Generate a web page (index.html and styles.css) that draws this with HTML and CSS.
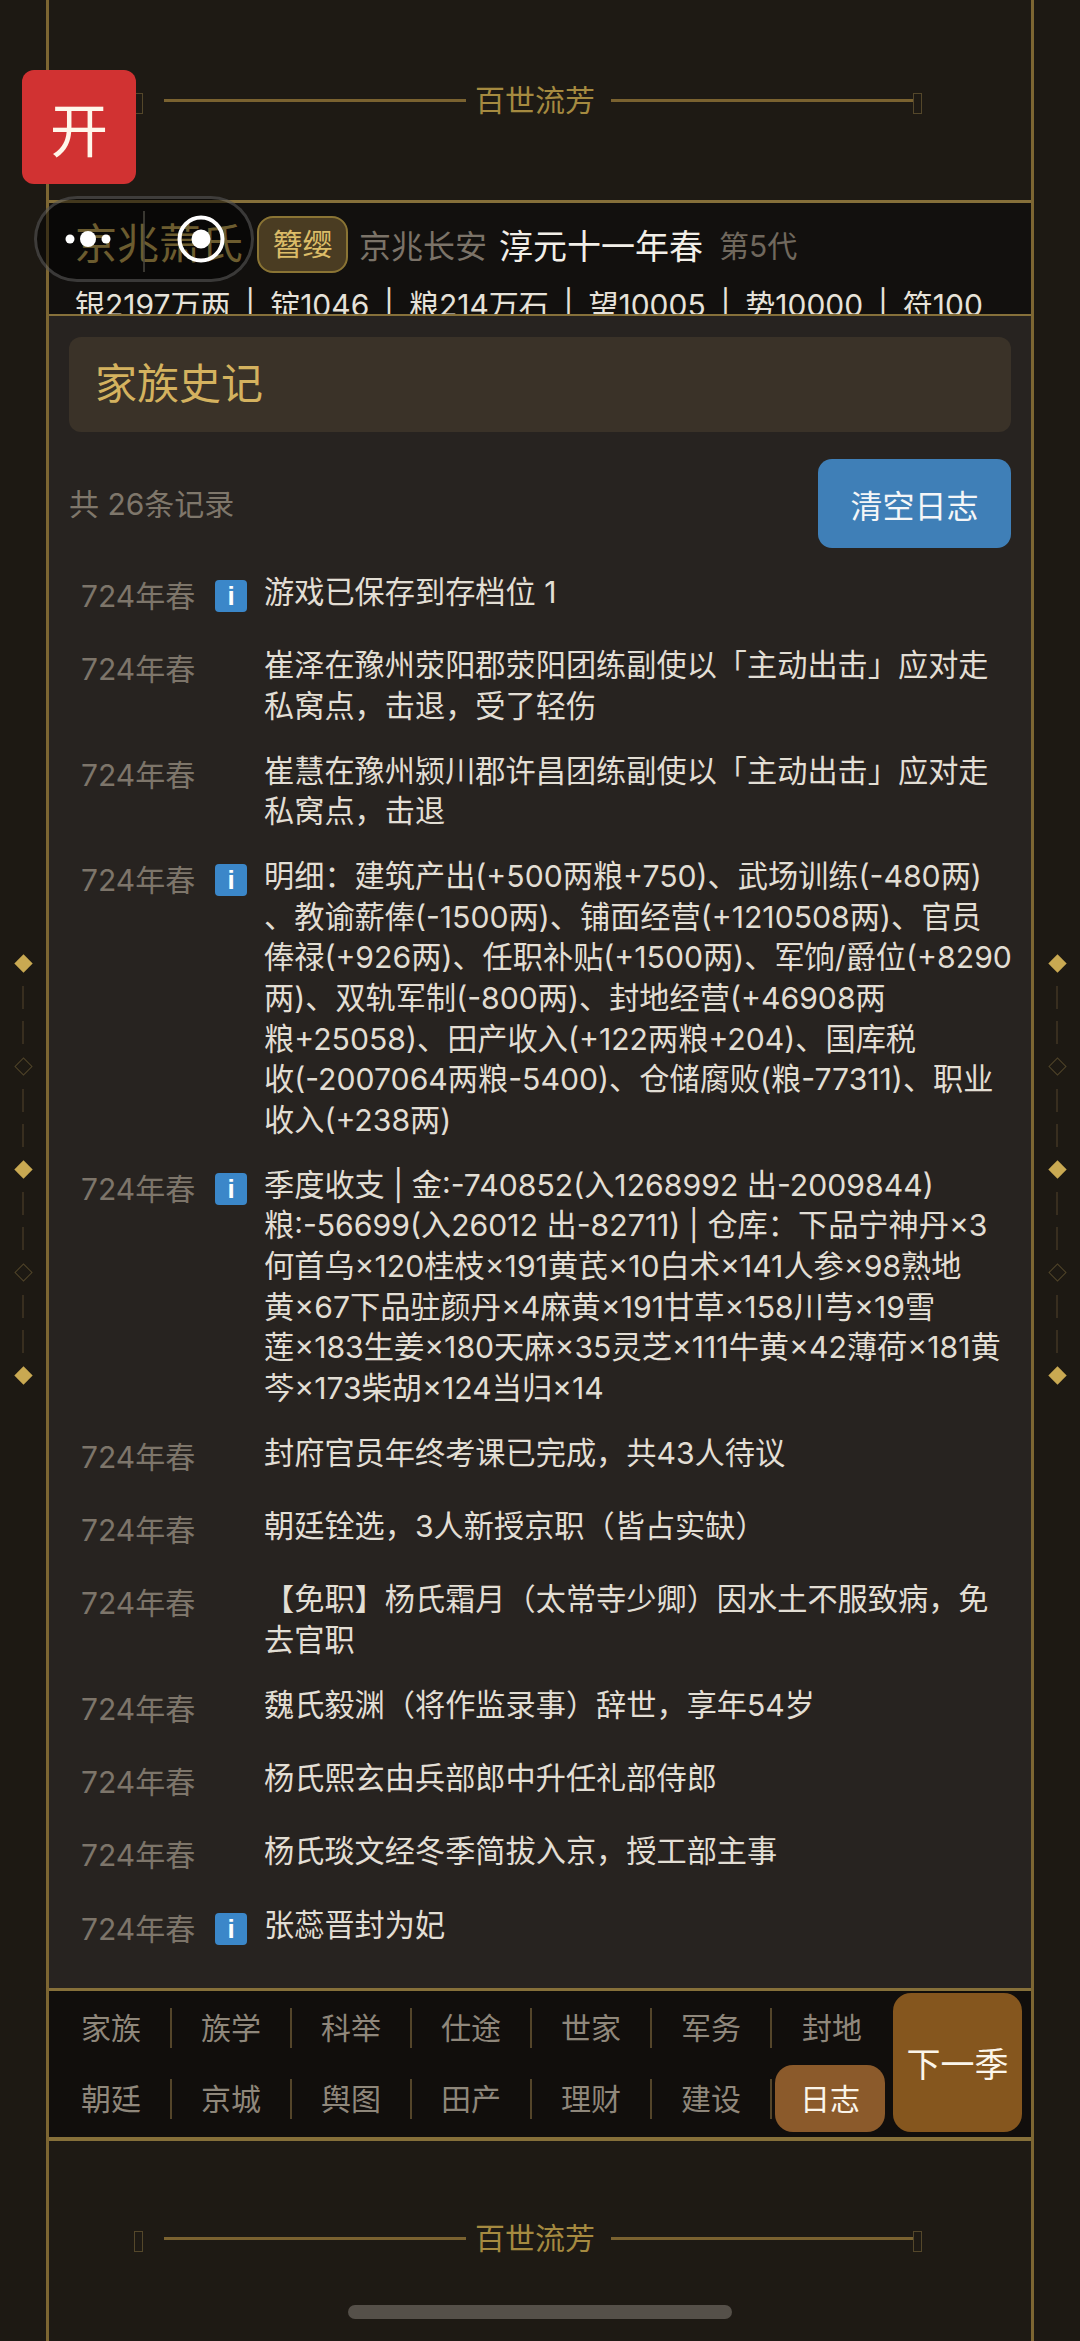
FILE: index.html
```html
<!DOCTYPE html>
<html lang="zh-CN">
<head>
<meta charset="utf-8">
<title>百世流芳</title>
<link rel="stylesheet" href="styles.css">
</head>
<body>
<div class="app">
  <aside class="rail">
    <i class="gem"></i><i class="dash"></i><i class="dash"></i>
    <i class="gem hollow"></i><i class="dash"></i><i class="dash"></i>
    <i class="gem"></i><i class="dash"></i><i class="dash"></i>
    <i class="gem hollow"></i><i class="dash"></i><i class="dash"></i>
    <i class="gem"></i>
  </aside>

  <div class="frame">
    <div class="banner top">
      <i class="tofu first"></i><i class="line"></i><span class="motto">百世流芳</span><i class="line"></i><i class="tofu"></i>
    </div>

    <header class="head">
      <div class="head-row">
        <span class="house">京兆萧氏</span>
        <span class="tag">簪缨</span>
        <span class="place">京兆长安</span>
        <span class="date">淳元十一年春</span>
        <span class="gen">第5代</span>
      </div>
      <div class="stats">银2197万两 | 锭1046 | 粮214万石 | 望10005 | 势10000 | 符100</div>
    </header>

    <main class="main">
      <h1 class="title">家族史记</h1>
      <div class="toolbar">
        <span class="count">共 26条记录</span>
        <button class="clear">清空日志</button>
      </div>
      <ul class="log">
        <li class="entry"><span class="time">724年春</span><span class="info">i</span><p class="msg">游戏已保存到存档位 1</p></li>
        <li class="entry"><span class="time">724年春</span><p class="msg">崔泽在豫州荥阳郡荥阳团练副使以「主动出击」应对走<br>私窝点，击退，受了轻伤</p></li>
        <li class="entry"><span class="time">724年春</span><p class="msg">崔慧在豫州颍川郡许昌团练副使以「主动出击」应对走<br>私窝点，击退</p></li>
        <li class="entry"><span class="time">724年春</span><span class="info">i</span><p class="msg">明细：建筑产出(+500两粮+750)、武场训练(-480两)<br>、教谕薪俸(-1500两)、铺面经营(+1210508两)、官员<br>俸禄(+926两)、任职补贴(+1500两)、军饷/爵位(+8290<br>两)、双轨军制(-800两)、封地经营(+46908两<br>粮+25058)、田产收入(+122两粮+204)、国库税<br>收(-2007064两粮-5400)、仓储腐败(粮-77311)、职业<br>收入(+238两)</p></li>
        <li class="entry"><span class="time">724年春</span><span class="info">i</span><p class="msg">季度收支 | 金:-740852(入1268992 出-2009844)<br>粮:-56699(入26012 出-82711) | 仓库：下品宁神丹×3<br>何首乌×120桂枝×191黄芪×10白术×141人参×98熟地<br>黄×67下品驻颜丹×4麻黄×191甘草×158川芎×19雪<br>莲×183生姜×180天麻×35灵芝×111牛黄×42薄荷×181黄<br>芩×173柴胡×124当归×14</p></li>
        <li class="entry"><span class="time">724年春</span><p class="msg">封府官员年终考课已完成，共43人待议</p></li>
        <li class="entry"><span class="time">724年春</span><p class="msg">朝廷铨选，3人新授京职（皆占实缺）</p></li>
        <li class="entry"><span class="time">724年春</span><p class="msg">【免职】杨氏霜月（太常寺少卿）因水土不服致病，免<br>去官职</p></li>
        <li class="entry"><span class="time">724年春</span><p class="msg">魏氏毅渊（将作监录事）辞世，享年54岁</p></li>
        <li class="entry"><span class="time">724年春</span><p class="msg">杨氏熙玄由兵部郎中升任礼部侍郎</p></li>
        <li class="entry"><span class="time">724年春</span><p class="msg">杨氏琰文经冬季简拔入京，授工部主事</p></li>
        <li class="entry"><span class="time">724年春</span><span class="info">i</span><p class="msg">张蕊晋封为妃</p></li>
      </ul>
    </main>

    <nav class="nav">
      <div class="tabs">
        <a class="tab"><span>家族</span></a>
        <a class="tab"><span>族学</span></a>
        <a class="tab"><span>科举</span></a>
        <a class="tab"><span>仕途</span></a>
        <a class="tab"><span>世家</span></a>
        <a class="tab"><span>军务</span></a>
        <a class="tab last"><span>封地</span></a>
        <a class="tab"><span>朝廷</span></a>
        <a class="tab"><span>京城</span></a>
        <a class="tab"><span>舆图</span></a>
        <a class="tab"><span>田产</span></a>
        <a class="tab"><span>理财</span></a>
        <a class="tab"><span>建设</span></a>
        <a class="tab active"><span>日志</span></a>
      </div>
      <button class="next">下一季</button>
    </nav>

    <div class="banner bottom">
      <i class="tofu first"></i><i class="line"></i><span class="motto">百世流芳</span><i class="line"></i><i class="tofu"></i>
    </div>
  </div>

  <aside class="rail">
    <i class="gem"></i><i class="dash"></i><i class="dash"></i>
    <i class="gem hollow"></i><i class="dash"></i><i class="dash"></i>
    <i class="gem"></i><i class="dash"></i><i class="dash"></i>
    <i class="gem hollow"></i><i class="dash"></i><i class="dash"></i>
    <i class="gem"></i>
  </aside>
</div>

<button class="open">开</button>
<div class="capsule">
  <svg class="capsule-icon" width="220" height="86" viewBox="0 0 220 86">
    <circle cx="36" cy="43" r="4.5" fill="#fff"/>
    <circle cx="54" cy="43" r="8" fill="#fff"/>
    <circle cx="72" cy="43" r="4.5" fill="#fff"/>
    <path d="M110 15V76" stroke="#4a4740" stroke-width="1.5"/>
    <circle cx="167" cy="43" r="21.5" fill="none" stroke="#fff" stroke-width="4"/>
    <circle cx="167" cy="43" r="9.5" fill="#fff"/>
  </svg>
</div>
<div class="home-bar"></div>
</body>
</html>
```

FILE: styles.css
```css
* { box-sizing: border-box; margin: 0; padding: 0; }

html, body {
  width: 1080px;
  height: 2341px;
  overflow: hidden;
  background: #1d1913;
}

body {
  position: relative;
  font-family: Inter, "Noto Sans CJK SC", "Noto Sans", sans-serif;
  font-weight: 400;
  color: #e2ded4;
}

.app {
  display: grid;
  grid-template-columns: 46px 988px 46px;
  height: 2341px;
}

.rail {
  display: flex;
  flex-direction: column;
  align-items: center;
  justify-content: center;
  padding-bottom: 3px;
  background: #1d1913;
}

.gem {
  width: 13px;
  height: 13px;
  margin: 10px 0;
  transform: rotate(45deg);
  background: #c9a952;
}

.gem.hollow {
  background: none;
  border: 1.5px solid #4f4328;
}

.dash {
  width: 2px;
  height: 23px;
  margin: 6px 0;
  background: #382e1f;
}

.frame {
  display: flex;
  flex-direction: column;
  height: 2341px;
  border-left: 3px solid #7d6632;
  border-right: 3px solid #7d6632;
  background: #1e1a14;
}

.banner {
  display: flex;
  align-items: center;
  flex: none;
  height: 200px;
  padding-left: 85px;
}

.banner.bottom { padding-bottom: 6px; }

.line {
  width: 302px;
  height: 3px;
  background: #7a6230;
}

.tofu {
  width: 9px;
  height: 21px;
  margin-top: 6px;
  border: 1px solid #54472a;
}

.tofu.first { margin-right: 21px; }

.motto {
  margin: 0 16px 0 9px;
  font-size: 30px;
  line-height: 40px;
  color: #a58a40;
}

.head {
  flex: none;
  height: 116px;
  overflow: hidden;
  padding-left: 26px;
  background: #12100e;
  border-top: 3px solid #86703a;
  border-bottom: 2px solid #86703a;
}

.head-row {
  display: flex;
  align-items: center;
  height: 82px;
  white-space: nowrap;
}

.house {
  width: 182px;
  font-size: 42px;
  line-height: 56px;
  color: #d8b95f;
}

.tag {
  width: 91px;
  height: 57px;
  border: 2px solid #8a7434;
  border-radius: 16px;
  background: #4a3c22;
  font-size: 30px;
  line-height: 52px;
  text-align: center;
  color: #dcbc68;
}

.place {
  margin-left: 11px;
  font-size: 32px;
  color: #7b7368;
}

.date {
  margin-left: 12px;
  font-size: 34px;
  color: #f2efe8;
}

.gen {
  margin-left: 16px;
  font-size: 30px;
  color: #70685d;
}

.stats {
  font-size: 30px;
  line-height: 40px;
  word-spacing: 6.4px;
  white-space: nowrap;
  color: #e6e2d9;
}

.main {
  flex: 1;
  min-height: 0;
  padding: 21px 20px 0;
  background: #272320;
}

.title {
  height: 95px;
  padding-left: 26px;
  border-radius: 12px;
  background: #3a3228;
  font-size: 42px;
  font-weight: 400;
  line-height: 94px;
  color: #d4b25f;
}

.toolbar {
  display: flex;
  align-items: center;
  justify-content: space-between;
  margin-top: 27px;
}

.count {
  padding-bottom: 3px;
  font-size: 30px;
  color: #7f776b;
}

.clear {
  width: 193px;
  height: 89px;
  border: 0;
  border-radius: 14px;
  background: #3f7fb7;
  font: inherit;
  font-size: 32px;
  color: #f4f6f8;
}

.log {
  display: flex;
  flex-direction: column;
  gap: 24.3px;
  margin-top: 24px;
  padding-left: 12px;
  list-style: none;
}

.entry {
  display: grid;
  grid-template-columns: 134px 32px 1fr;
}

.time {
  grid-column: 1;
  font-size: 30px;
  line-height: 49px;
  color: #7d756a;
}

.info {
  grid-column: 2;
  width: 32px;
  height: 32px;
  margin-top: 8px;
  border-radius: 4px;
  background: #3b87c9;
  font-family: "Liberation Sans", sans-serif;
  font-size: 26px;
  font-weight: 700;
  line-height: 32px;
  text-align: center;
  color: #fff;
}

.msg {
  grid-column: 3;
  padding-left: 17px;
  font-size: 30.2px;
  line-height: 40.6px;
  white-space: nowrap;
}

.nav {
  display: flex;
  flex: none;
  gap: 1px;
  height: 153px;
  padding: 2px 9px 0 3px;
  background: #110e0c;
  border-top: 3px solid #86703a;
  border-bottom: 4px solid #86703a;
}

.tabs {
  display: grid;
  grid-template-columns: repeat(7, 120px);
  grid-auto-rows: 67px;
  row-gap: 4px;
  padding-top: 1px;
}

.tab {
  display: flex;
  align-items: center;
  font-size: 30px;
  color: #8f877b;
}

.tab span {
  width: 100%;
  border-right: 2px solid #54452a;
  line-height: 40px;
  text-align: center;
}

.tab.last span { border-right: 0; }

.tab.active {
  margin: 0 7px 0 3px;
  border-radius: 18px;
  background: #8b5a2b;
  color: #fbf5ea;
}

.tab.active span { border-right: 0; }

.next {
  width: 130px;
  height: 139px;
  border: 0;
  border-radius: 18px;
  background: #85561e;
  font: inherit;
  font-size: 34px;
  color: #fbf5ea;
}

.open {
  position: absolute;
  left: 22px;
  top: 70px;
  width: 114px;
  height: 114px;
  border: 0;
  border-radius: 12px;
  background: #d13232;
  font: inherit;
  font-size: 58px;
  color: #fff6ea;
}

.capsule {
  position: absolute;
  left: 34px;
  top: 196px;
  width: 220px;
  height: 86px;
  border-radius: 43px;
  background: rgba(0, 0, 0, 0.5);
  box-shadow: inset 0 0 0 3px rgba(255, 255, 255, 0.2);
}

.capsule-icon { display: block; }

.home-bar {
  position: absolute;
  left: 348px;
  top: 2305px;
  width: 384px;
  height: 14px;
  border-radius: 7px;
  background: #555049;
}
```
